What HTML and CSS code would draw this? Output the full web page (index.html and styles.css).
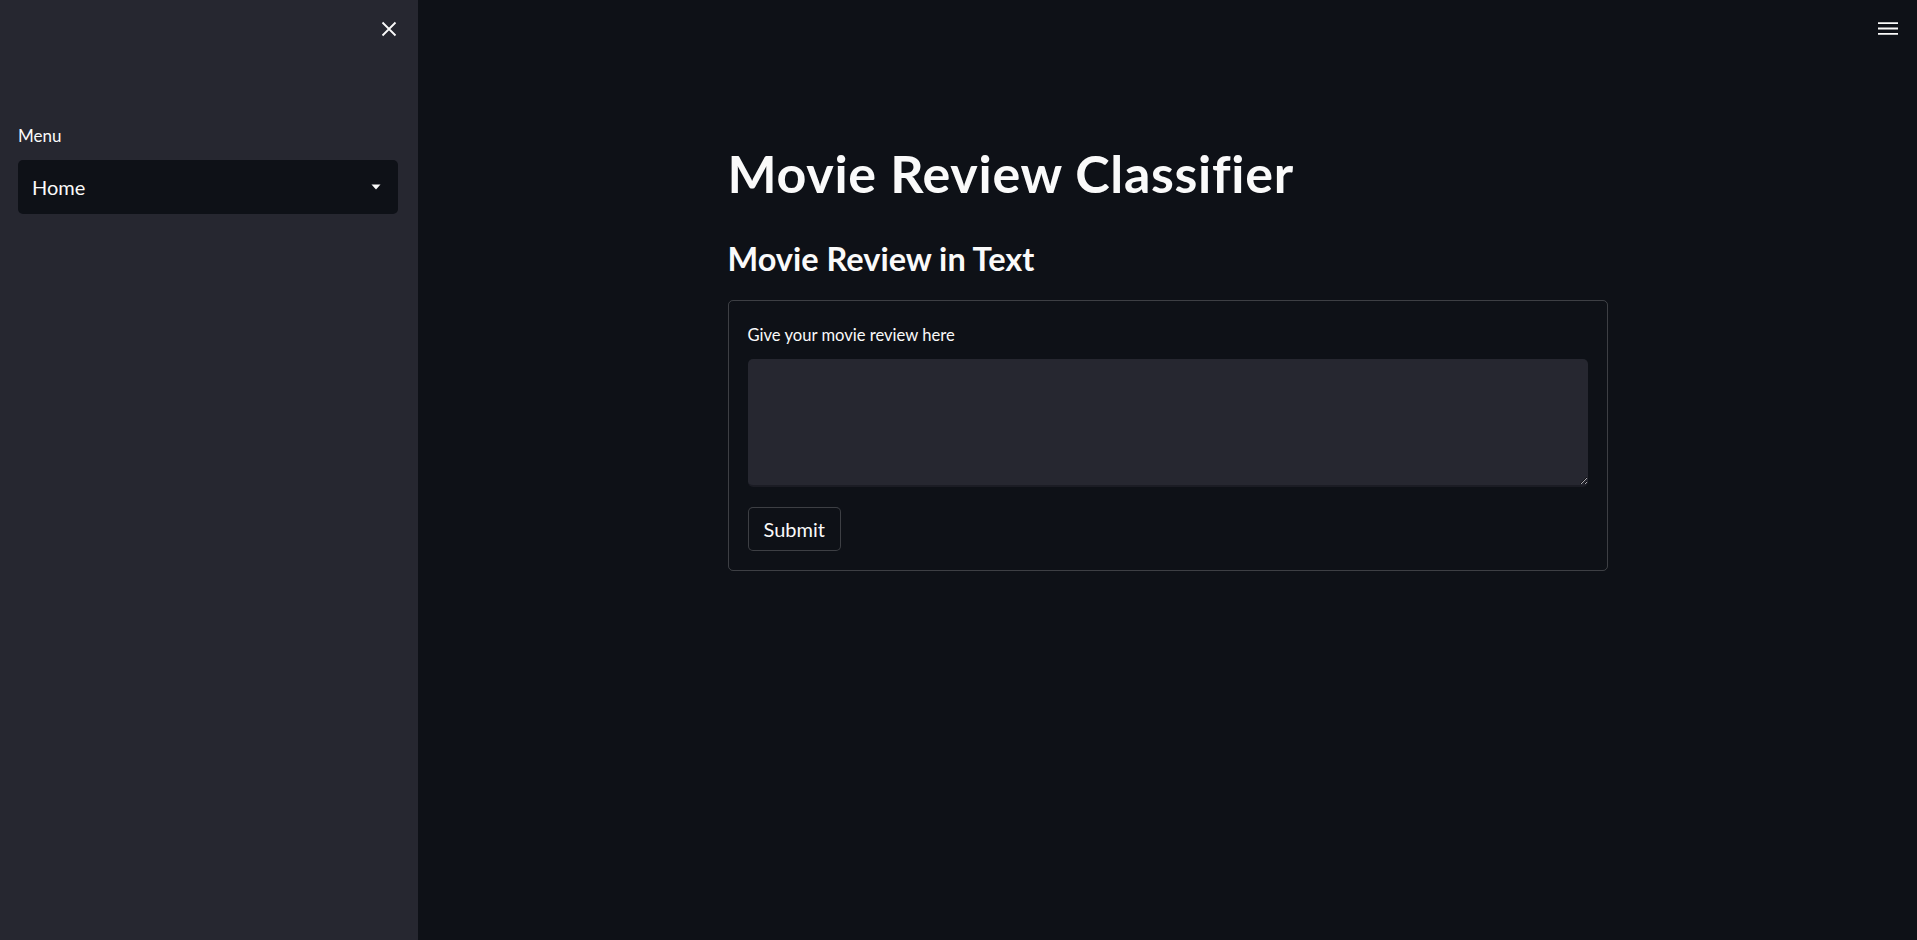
FILE: index.html
```html
<!DOCTYPE html>
<html>
<head>
<meta charset="utf-8">
<link rel="stylesheet" href="styles.css">
</head>
<body>
<div class="app">
  <aside class="sidebar">
    <div class="sidebar-top">
      <button class="icon-btn close-btn" aria-label="Close sidebar">
        <svg width="16" height="16" viewBox="0 0 16 16"><path d="M1.5 1.5 L14.5 14.5 M14.5 1.5 L1.5 14.5" stroke="#fafafa" stroke-width="1.8" fill="none"/></svg>
      </button>
    </div>
    <div class="sidebar-body">
      <label class="widget-label menu-label">Menu</label>
      <div class="select">
        <span class="select-value">Home</span>
        <svg class="caret" width="10" height="6" viewBox="0 0 10 6"><path d="M0.5 0.5 L9.5 0.5 L5 5.5 Z" fill="#fafafa"/></svg>
      </div>
    </div>
  </aside>
  <main class="main">
    <div class="toolbar">
      <button class="icon-btn menu-btn" aria-label="Main menu">
        <svg width="20" height="14" viewBox="0 0 20 14"><path d="M0 1.2 H20 M0 6.5 H20 M0 11.8 H20" stroke="#fafafa" stroke-width="1.8"/></svg>
      </button>
    </div>
    <div class="content">
      <h1 class="title">Movie Review Classifier</h1>
      <h3 class="subheader">Movie Review in Text</h3>
      <form class="form">
        <label class="widget-label form-label">Give your movie review here</label>
        <div class="textarea-wrap">
          <textarea class="textarea"></textarea>
        </div>
        <button type="button" class="btn">Submit</button>
      </form>
    </div>
  </main>
</div>
</body>
</html>
```

FILE: styles.css
```css
* { box-sizing: border-box; }
html, body {
  margin: 0;
  padding: 0;
  height: 100%;
  background: #0e1117;
  color: #fafafa;
  font-family: "Lato", "Open Sans", sans-serif;
}
.app {
  display: flex;
  height: 940px;
  overflow: hidden;
}
.sidebar {
  width: 418px;
  flex: none;
  background: #262730;
  display: flex;
  flex-direction: column;
}
.sidebar-top {
  display: flex;
  justify-content: flex-end;
  padding: 21px 21px 0 0;
  height: 125px;
}
.icon-btn {
  background: none;
  border: none;
  padding: 0;
  margin: 0;
  cursor: pointer;
  display: flex;
}
.sidebar-body {
  padding: 0 20px 0 18px;
}
.widget-label {
  display: block;
  font-size: 17px;
  line-height: 22px;
  color: #fafafa;
  margin-bottom: 11px;
}
.menu-label {
  margin-bottom: 13px;
}
.select {
  height: 54px;
  background: #0e1117;
  border-radius: 5px;
  display: flex;
  align-items: center;
  justify-content: space-between;
  padding: 0 17px 0 14px;
}
.select-value {
  font-size: 20px;
}
.caret { display: block; }
.main {
  flex: 1;
  display: flex;
  flex-direction: column;
}
.toolbar {
  display: flex;
  justify-content: flex-end;
  padding: 22px 19px 0 0;
  height: 131px;
}
.content {
  width: 880px;
  margin: 0 auto;
}
.title {
  font-size: 52px;
  font-weight: 700;
  line-height: 66px;
  margin: 0;
  padding: 9px 0 0;
  letter-spacing: 0.7px;
}
.subheader {
  font-size: 32.5px;
  font-weight: 700;
  line-height: 40px;
  margin: 0;
  padding: 33px 0 21px;
}
.form {
  border: 1px solid rgba(250, 250, 250, 0.2);
  border-radius: 5px;
  padding: 23px 19px 19px;
  display: flex;
  flex-direction: column;
  align-items: flex-start;
}
.form-label {
  font-size: 16.6px;
  margin-bottom: 13px;
}
.textarea-wrap {
  width: 100%;
  background: #262730;
  border-radius: 5px;
  border-bottom: 2px solid #1b1c24;
  margin-bottom: 20px;
}
.textarea {
  display: block;
  width: 100%;
  height: 126px;
  background: transparent;
  border: none;
  outline: none;
  resize: vertical;
  color: #fafafa;
  font-family: inherit;
  font-size: 20px;
  padding: 10px 14px;
  color-scheme: dark;
}
.btn {
  background: #0e1117;
  color: #fafafa;
  border: 1px solid rgba(250, 250, 250, 0.2);
  border-radius: 5px;
  height: 44px;
  padding: 0 15px;
  font-family: inherit;
  font-size: 20px;
}
```
